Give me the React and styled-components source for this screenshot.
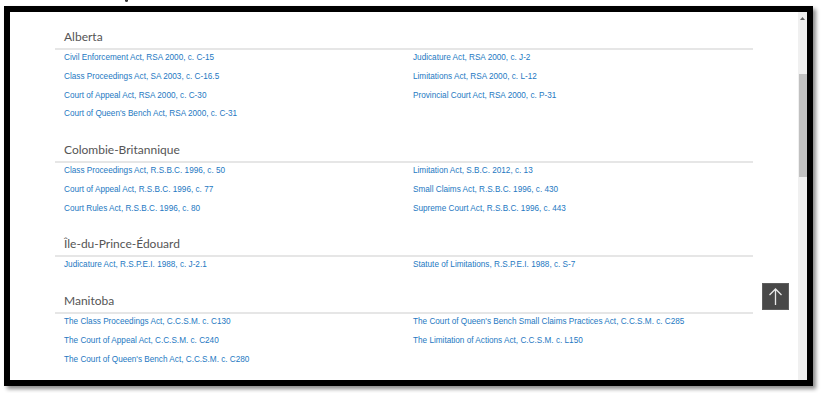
import styled, { createGlobalStyle } from "styled-components";

const GlobalStyle = createGlobalStyle`
  html, body {
    margin: 0;
    padding: 0;
    background: #ffffff;
  }
  body {
    width: 822px;
    height: 393px;
    overflow: hidden;
  }
`;

const SECTIONS = [
  {
    name: "Alberta",
    left: [
      "Civil Enforcement Act, RSA 2000, c. C-15",
      "Class Proceedings Act, SA 2003, c. C-16.5",
      "Court of Appeal Act, RSA 2000, c. C-30",
      "Court of Queen's Bench Act, RSA 2000, c. C-31",
    ],
    right: [
      "Judicature Act, RSA 2000, c. J-2",
      "Limitations Act, RSA 2000, c. L-12",
      "Provincial Court Act, RSA 2000, c. P-31",
    ],
  },
  {
    name: "Colombie-Britannique",
    left: [
      "Class Proceedings Act, R.S.B.C. 1996, c. 50",
      "Court of Appeal Act, R.S.B.C. 1996, c. 77",
      "Court Rules Act, R.S.B.C. 1996, c. 80",
    ],
    right: [
      "Limitation Act, S.B.C. 2012, c. 13",
      "Small Claims Act, R.S.B.C. 1996, c. 430",
      "Supreme Court Act, R.S.B.C. 1996, c. 443",
    ],
  },
  {
    name: "Île-du-Prince-Édouard",
    left: ["Judicature Act, R.S.P.E.I. 1988, c. J-2.1"],
    right: ["Statute of Limitations, R.S.P.E.I. 1988, c. S-7"],
  },
  {
    name: "Manitoba",
    left: [
      "The Class Proceedings Act, C.C.S.M. c. C130",
      "The Court of Appeal Act, C.C.S.M. c. C240",
      "The Court of Queen's Bench Act, C.C.S.M. c. C280",
    ],
    right: [
      "The Court of Queen's Bench Small Claims Practices Act, C.C.S.M. c. C285",
      "The Limitation of Actions Act, C.C.S.M. c. L150",
    ],
  },
];

// leftover of whatever sat above the captured frame
const TopStrip = styled.div`
  height: 6px;
  padding-left: 125px;
`;

const Speck = styled.div`
  width: 3px;
  height: 2px;
  border-radius: 0 0 2px 2px;
  background: #333;
`;

const Frame = styled.div`
  position: relative;
  margin-left: 4px;
  width: 797px;
  height: 368px;
  border: 6px solid #000;
  display: flex;
  background: #fff;
  box-shadow: 3px 3px 4px rgba(0, 0, 0, 0.45);
`;

const Content = styled.div`
  flex: 1;
  overflow: hidden;
  padding-top: 17px;
`;

const Container = styled.div`
  width: 698px;
  margin: 0 auto;
`;

const Section = styled.section`
  margin-bottom: 19.7px;
`;

const Heading = styled.h2`
  margin: 0;
  padding: 0 0 3px 9px;
  font-family: Lato, "Open Sans", sans-serif;
  font-weight: 400;
  font-size: 12px;
  line-height: 16px;
  color: #555;
  border-bottom: 2px solid #e6e6e6;
`;

const Columns = styled.div`
  display: grid;
  grid-template-columns: 1fr 1fr;
`;

const List = styled.ul`
  list-style: none;
  margin: 0;
  padding: 0 0 0 9px;
  display: flex;
  flex-direction: column;
  gap: 2.8px;
`;

const Item = styled.li`
  font-family: "Liberation Sans", Arial, sans-serif;
  font-size: 8.2px;
  line-height: 16px;
  white-space: nowrap;
`;

const Link = styled.a`
  color: #2478c2;
  text-decoration: none;
`;

const Scrollbar = styled.div`
  width: 9px;
  background: #f0f0f0;
  display: flex;
  flex-direction: column;
  align-items: center;
`;

const ArrowCap = styled.div`
  height: 12px;
  width: 100%;
  display: flex;
  align-items: center;
  justify-content: center;
`;

const Thumb = styled.div`
  margin-top: 50px;
  width: 8px;
  height: 103px;
  background: #c1c1c1;
`;

const BackToTop = styled.button`
  position: absolute;
  top: 271px;
  right: 18px;
  width: 27px;
  height: 27px;
  padding: 0;
  border: 1px solid #5e5e5e;
  background: #484848;
  display: flex;
  align-items: center;
  justify-content: center;
  cursor: pointer;
`;

function LawSection({ section }) {
  return (
    <Section>
      <Heading>{section.name}</Heading>
      <Columns>
        <List>
          {section.left.map((law) => (
            <Item key={law}>
              <Link href="#">{law}</Link>
            </Item>
          ))}
        </List>
        <List>
          {section.right.map((law) => (
            <Item key={law}>
              <Link href="#">{law}</Link>
            </Item>
          ))}
        </List>
      </Columns>
    </Section>
  );
}

export default function App() {
  return (
    <>
      <GlobalStyle />
      <TopStrip>
        <Speck />
      </TopStrip>
      <Frame>
        <Content>
          <Container>
            {SECTIONS.map((s) => (
              <LawSection key={s.name} section={s} />
            ))}
          </Container>
        </Content>
        <Scrollbar>
          <ArrowCap>
            <svg width="5" height="3" viewBox="0 0 5 3">
              <path d="M0 3 L2.5 0 L5 3 Z" fill="#606060" />
            </svg>
          </ArrowCap>
          <Thumb />
        </Scrollbar>
        <BackToTop aria-label="Back to top">
          <svg width="17" height="19" viewBox="0 0 17 19">
            <path
              d="M8.5 2 V18 M2.5 8 L8.5 2 L14.5 8"
              fill="none"
              stroke="#e8e8e8"
              strokeWidth="1.3"
            />
          </svg>
        </BackToTop>
      </Frame>
    </>
  );
}
